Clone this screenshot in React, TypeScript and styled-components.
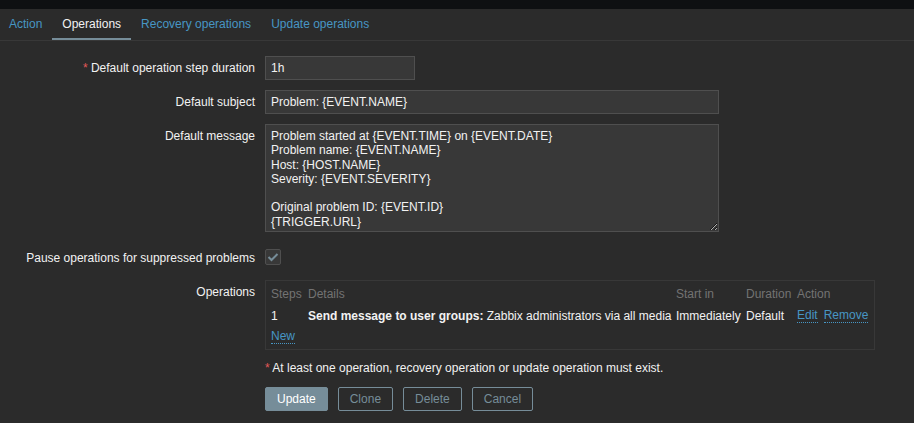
import React from "react";
import styled, { createGlobalStyle } from "styled-components";

const Global = createGlobalStyle`
  html, body { margin: 0; padding: 0; background: #2b2b2b; }
  body {
    font-family: "Liberation Sans", Arial, sans-serif;
    font-size: 12px;
    line-height: 14px;
    color: #f2f2f2;
  }
  * { box-sizing: border-box; }
`;

const Page = styled.div`
  width: 914px;
  min-height: 423px;
  background: #2b2b2b;
`;

const TopBar = styled.div`
  height: 9px;
  background: #0e1012;
`;

const Tabs = styled.ul`
  display: flex;
  list-style: none;
  margin: 0 0 0 -1px;
  padding: 0;
  border-bottom: 1px solid #383838;
`;

const Tab = styled.li<{ $active?: boolean }>`
  padding: 2px 10px 0;
  line-height: 27px;
  height: 31px;
  border-bottom: 2px solid ${(p) => (p.$active ? "#768d99" : "transparent")};
  color: ${(p) => (p.$active ? "#f2f2f2" : "#4796c4")};
  cursor: pointer;
`;

const Form = styled.div`
  padding-top: 15px;
`;

const Row = styled.div<{ $mt?: number }>`
  display: flex;
  align-items: flex-start;
  margin-top: ${(p) => p.$mt ?? 0}px;
`;

const Label = styled.div<{ $pt?: number }>`
  width: 255px;
  flex: none;
  text-align: right;
  padding-top: ${(p) => p.$pt ?? 5}px;
  margin-right: 10px;
  white-space: nowrap;
`;

const Req = styled.span`
  color: #e45959;
`;

const Field = styled.div``;

const Input = styled.input<{ $w: number }>`
  display: block;
  width: ${(p) => p.$w}px;
  height: 24px;
  margin: 0;
  padding: 4px 5px;
  background: #383838;
  border: 1px solid #4f4f4f;
  color: #f2f2f2;
  font: inherit;
  line-height: 14px;
  outline: none;
`;

const TextArea = styled.textarea`
  display: block;
  width: 454px;
  height: 108px;
  margin: 0;
  padding: 4px 5px;
  background: #383838;
  border: 1px solid #4f4f4f;
  color: #f2f2f2;
  font: inherit;
  line-height: 14.3px;
  resize: both;
  outline: none;
  overflow: hidden;
  color-scheme: dark;
`;

const Checkbox = styled.span`
  display: flex;
  align-items: center;
  justify-content: center;
  width: 16px;
  height: 16px;
  background: #383838;
  border: 1px solid #4f4f4f;
  border-radius: 2px;
`;

const OpsBox = styled.div`
  width: 610px;
  border: 1px solid #383838;
  padding: 4px 5px 5px 5px;
`;

const Table = styled.table`
  width: 598px;
  table-layout: fixed;
  border-collapse: collapse;
  border-spacing: 0;
`;

const Th = styled.th`
  text-align: left;
  font-weight: normal;
  color: #737373;
  padding: 2px 0 2px 0;
  white-space: nowrap;
`;

const Td = styled.td`
  padding: 5px 0 2px 0;
  white-space: nowrap;
`;

const Link = styled.a`
  color: #4796c4;
  text-decoration: none;
  border-bottom: 1px dotted #4796c4;
  cursor: pointer;
`;

const Actions = styled.span`
  display: inline-flex;
  gap: 6px;
`;

const NewRow = styled.div`
  padding-top: 4px;
  height: 19px;
`;

const Note = styled.div`
  margin-top: 11px;
  margin-left: 265px;
`;

const Buttons = styled.div`
  display: flex;
  gap: 10px;
  margin-top: 12px;
  margin-left: 265px;
`;

const Button = styled.button<{ $primary?: boolean }>`
  height: 24px;
  padding: 0 11px;
  margin: 0;
  font: inherit;
  border-radius: 2px;
  border: 1px solid #768d99;
  background: ${(p) => (p.$primary ? "#768d99" : "transparent")};
  color: ${(p) => (p.$primary ? "#ffffff" : "#768d99")};
  cursor: pointer;
`;

const message = `Problem started at {EVENT.TIME} on {EVENT.DATE}
Problem name: {EVENT.NAME}
Host: {HOST.NAME}
Severity: {EVENT.SEVERITY}

Original problem ID: {EVENT.ID}
{TRIGGER.URL}`;

export default function App() {
  return (
    <Page>
      <Global />
      <TopBar />
      <Tabs>
        <Tab>Action</Tab>
        <Tab $active>Operations</Tab>
        <Tab>Recovery operations</Tab>
        <Tab>Update operations</Tab>
      </Tabs>
      <Form>
        <Row>
          <Label>
            <Req>*</Req> Default operation step duration
          </Label>
          <Field>
            <Input $w={150} defaultValue="1h" />
          </Field>
        </Row>
        <Row $mt={10}>
          <Label>Default subject</Label>
          <Field>
            <Input $w={454} defaultValue="Problem: {EVENT.NAME}" />
          </Field>
        </Row>
        <Row $mt={10}>
          <Label>Default message</Label>
          <Field>
            <TextArea defaultValue={message} spellCheck={false} />
          </Field>
        </Row>
        <Row $mt={17}>
          <Label $pt={2}>Pause operations for suppressed problems</Label>
          <Field>
            <Checkbox>
              <svg width="12" height="10" viewBox="0 0 12 10">
                <polyline
                  points="1.5,5 4.5,8 10.5,2"
                  fill="none"
                  stroke="#768d99"
                  strokeWidth="2"
                />
              </svg>
            </Checkbox>
          </Field>
        </Row>
        <Row $mt={15}>
          <Label>Operations</Label>
          <Field>
            <OpsBox>
              <Table>
                <colgroup>
                  <col style={{ width: 37 }} />
                  <col style={{ width: 368 }} />
                  <col style={{ width: 70 }} />
                  <col style={{ width: 51 }} />
                  <col style={{ width: 72 }} />
                </colgroup>
                <thead>
                  <tr>
                    <Th>Steps</Th>
                    <Th>Details</Th>
                    <Th>Start in</Th>
                    <Th>Duration</Th>
                    <Th>Action</Th>
                  </tr>
                </thead>
                <tbody>
                  <tr>
                    <Td>1</Td>
                    <Td>
                      <b>Send message to user groups:</b> Zabbix administrators via all media
                    </Td>
                    <Td>Immediately</Td>
                    <Td>Default</Td>
                    <Td>
                      <Actions>
                        <Link>Edit</Link>
                        <Link>Remove</Link>
                      </Actions>
                    </Td>
                  </tr>
                </tbody>
              </Table>
              <NewRow>
                <Link>New</Link>
              </NewRow>
            </OpsBox>
          </Field>
        </Row>
        <Note>
          <Req>*</Req> At least one operation, recovery operation or update operation must exist.
        </Note>
        <Buttons>
          <Button $primary>Update</Button>
          <Button>Clone</Button>
          <Button>Delete</Button>
          <Button>Cancel</Button>
        </Buttons>
      </Form>
    </Page>
  );
}
